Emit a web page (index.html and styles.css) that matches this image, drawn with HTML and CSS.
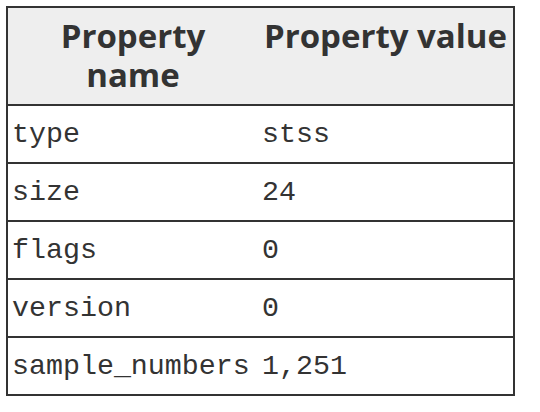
FILE: index.html
```html
<!DOCTYPE html>
<html>
<head>
<meta charset="utf-8">
<link rel="stylesheet" href="styles.css">
</head>
<body>
<table class="props">
  <thead>
    <tr>
      <th class="col-name">Property name</th>
      <th class="col-value">Property value</th>
    </tr>
  </thead>
  <tbody>
    <tr><td>type</td><td>stss</td></tr>
    <tr><td>size</td><td>24</td></tr>
    <tr><td>flags</td><td>0</td></tr>
    <tr><td>version</td><td>0</td></tr>
    <tr><td>sample_numbers</td><td>1,251</td></tr>
  </tbody>
</table>
</body>
</html>
```

FILE: styles.css
```css
html, body {
  background: #fff;
}
body {
  margin: 6px;
  color: #333;
}
.props {
  border-collapse: collapse;
  border: 2px solid #333;
  table-layout: fixed;
  width: 509px;
}
.props th {
  background: #eee;
  font-family: "Open Sans", sans-serif;
  font-weight: 700;
  font-size: 33px;
  line-height: 39px;
  padding: 8px 4px 10px;
  text-align: center;
  vertical-align: top;
  border-bottom: 2px solid #333;
}
.props th.col-name {
  width: 242px;
}
.props td {
  font-family: "Liberation Mono", monospace;
  font-size: 28.3px;
  line-height: 32px;
  padding: 12px 4px 12px 4px;
  border-top: 2px solid #333;
  text-align: left;
  white-space: nowrap;
}
```
